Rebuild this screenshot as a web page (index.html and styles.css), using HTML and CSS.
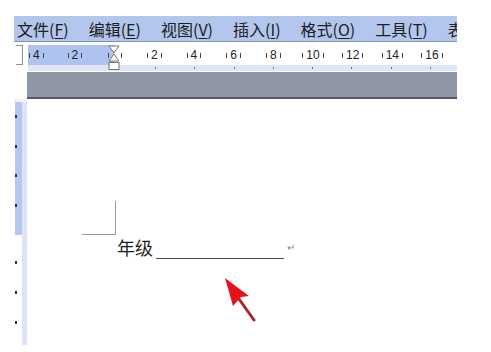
FILE: index.html
```html
<!DOCTYPE html>
<html lang="zh-CN">

<head>
    <meta charset="UTF-8">
    <meta name="viewport" content="width=device-width, initial-scale=1.0">
    <title>年级 - 文档</title>
    <link rel="stylesheet" href="styles.css">
</head>

<body>

    <div class="window">
        <!-- Menu bar -->
        <div class="menubar">
            <span class="menu-item">文件(<u>F</u>)</span>
            <span class="menu-item">编辑(<u>E</u>)</span>
            <span class="menu-item">视图(<u>V</u>)</span>
            <span class="menu-item">插入(<u>I</u>)</span>
            <span class="menu-item">格式(<u>O</u>)</span>
            <span class="menu-item">工具(<u>T</u>)</span>
            <span class="menu-item">表</span>
        </div>

        <!-- Horizontal ruler -->
        <div class="ruler-row">
            <div class="ruler-box"></div>
            <div class="ruler">
                <div class="ruler-top">
                    <div class="ruler-margin"></div>
                    <div class="ruler-nums">
                        <span class="num first">4</span>
                        <span class="num">2</span>
                        <span class="num gap"></span>
                        <span class="num">2</span>
                        <span class="num">4</span>
                        <span class="num">6</span>
                        <span class="num">8</span>
                        <span class="num">10</span>
                        <span class="num">12</span>
                        <span class="num">14</span>
                        <span class="num">16</span>
                    </div>
                </div>
                <div class="ruler-strip">
                    <span class="stop"></span>
                    <span class="stop"></span>
                    <span class="stop"></span>
                    <span class="stop"></span>
                    <span class="stop"></span>
                    <span class="stop"></span>
                    <span class="stop"></span>
                    <span class="stop"></span>
                </div>
                <svg class="indent-marker" width="12" height="26" viewBox="0 0 12 26">
                    <path d="M1 1 H11 L6 8 Z" fill="#fff" stroke="#777" stroke-width="1"/>
                    <path d="M6 9 L11 16 H1 Z" fill="#fff" stroke="#777" stroke-width="1"/>
                    <rect x="1" y="17.5" width="10" height="7" fill="#fff" stroke="#777" stroke-width="1"/>
                </svg>
            </div>
        </div>

        <div class="grey-bar"></div>

        <!-- Document area -->
        <div class="doc">
            <div class="vruler">
                <div class="vruler-top"></div>
                <div class="vruler-body">
                    <div class="vruler-margin">
                        <span class="vtick"></span>
                        <span class="vtick"></span>
                        <span class="vtick"></span>
                        <span class="vtick"></span>
                    </div>
                    <div class="vruler-text">
                        <span class="vtick"></span>
                        <span class="vtick"></span>
                        <span class="vtick"></span>
                    </div>
                </div>
            </div>

            <div class="page">
                <div class="corner"></div>
                <p class="line">年级<span class="blank"></span><span class="para">↵</span></p>
            </div>
        </div>
    </div>

    <!-- annotation arrow -->
    <svg class="arrow" width="40" height="52" viewBox="220 272 40 52">
        <line x1="239" y1="299" x2="254" y2="320" stroke="#a8262c" stroke-width="3" stroke-linecap="round"/>
        <path d="M225 278 L249 296 L241 297 L233 306 Z" fill="#e3121c"/>
    </svg>

</body>

</html>
```

FILE: styles.css
```css
body {
    font-family: "Noto Sans CJK SC", "Liberation Sans", sans-serif;
    margin: 0;
    padding: 0;
    background-color: #fff;
    color: #1c1c1c;
}

.window {
    width: 443px;
    margin-left: 14px;
    padding-top: 16px;
}

/* Menu bar */
.menubar {
    display: flex;
    align-items: center;
    gap: 20px;
    height: 25px;
    padding-left: 3px;
    background-color: #b2c6ee;
    border-bottom: 1px solid #8193b8;
    font-size: 16px;
    white-space: nowrap;
    overflow: hidden;
    color: #202020;
}

.menu-item u {
    text-underline-offset: 2px;
}

/* Horizontal ruler */
.ruler-row {
    display: flex;
    margin-top: 3px;
    height: 26px;
}

.ruler-box {
    width: 6px;
    height: 18px;
    margin-left: 2px;
    margin-right: 5px;
    border: 1px solid #8e8e8e;
    border-left: none;
    background: #fff;
}

.ruler {
    flex: 1;
    position: relative;
    display: flex;
    flex-direction: column;
    overflow: hidden;
}

.ruler-top {
    height: 20px;
    position: relative;
    background: #fff;
}

.ruler-margin {
    position: absolute;
    left: 0;
    top: 0;
    bottom: 0;
    width: 86px;
    background: #aec3ee;
}

.ruler-nums {
    position: relative;
    display: flex;
    font-family: "Liberation Sans", sans-serif;
    font-size: 12px;
    line-height: 20px;
    color: #222;
    white-space: nowrap;
}

.num {
    flex: 0 0 39.7px;
    display: flex;
    justify-content: center;
    align-items: center;
    gap: 3px;
}

.num.first {
    flex-basis: 26px;
    justify-content: flex-start;
    margin-left: 1px;
}

.num::before,
.num::after {
    content: "";
    width: 1px;
    height: 5px;
    background: #444;
}

.num.gap {
    gap: 12px;
}

.ruler-strip {
    flex: 1;
    display: flex;
    padding-left: 127px;
    background: #dfe7f7;
}

.stop {
    flex: 0 0 39.3px;
}

.stop::before {
    content: "";
    display: block;
    width: 1px;
    height: 2px;
    margin-top: 2px;
    background: #777;
}

.indent-marker {
    position: absolute;
    left: 80px;
    top: 0;
}

.grey-bar {
    margin-left: 13px;
    height: 25px;
    background-color: #8f96a6;
    border-bottom: 2px solid #525866;
    margin-top: 1px;
}

/* Document */
.doc {
    display: flex;
    height: 254px;
}

.vruler {
    width: 13px;
    display: flex;
    flex-direction: column;
}

.vruler-top {
    height: 3px;
    background: #eef3fb;
}

.vruler-body {
    flex: 1;
    display: flex;
    flex-direction: column;
    background: linear-gradient(to right, #fff 0, #fff 8px, #dbe5f7 8px);
    margin-bottom: 8px;
}

.vruler-margin {
    height: 133px;
    margin-left: 1px;
    margin-right: 5px;
    background: #b3c7ef;
    display: flex;
    flex-direction: column;
    gap: 26.5px;
    padding-top: 13px;
    box-sizing: border-box;
}

.vruler-text {
    flex: 1;
    display: flex;
    flex-direction: column;
    gap: 27px;
    padding-top: 26px;
}

.vtick {
    display: block;
    width: 2px;
    height: 3px;
    margin-left: 1px;
    background: #333;
}

.vruler-margin .vtick {
    margin-left: 0;
}

.page {
    flex: 1;
    background: #fff;
}

.corner {
    width: 33px;
    height: 33px;
    margin-left: 55px;
    margin-top: 102px;
    border-right: 1px solid #9a9a9a;
    border-bottom: 1px solid #9a9a9a;
}

.line {
    margin: 0 0 0 90px;
    font-size: 18px;
    line-height: 24px;
    color: #1e1e1e;
    display: flex;
    align-items: flex-end;
}

.blank {
    display: inline-block;
    width: 128px;
    height: 1px;
    margin: 0 0 0 3px;
    background: #4a4a4a;
}

.para {
    font-size: 10px;
    line-height: 12px;
    color: #888;
    margin: 0 0 6px 3px;
}

.arrow {
    position: absolute;
    left: 220px;
    top: 272px;
}
```
